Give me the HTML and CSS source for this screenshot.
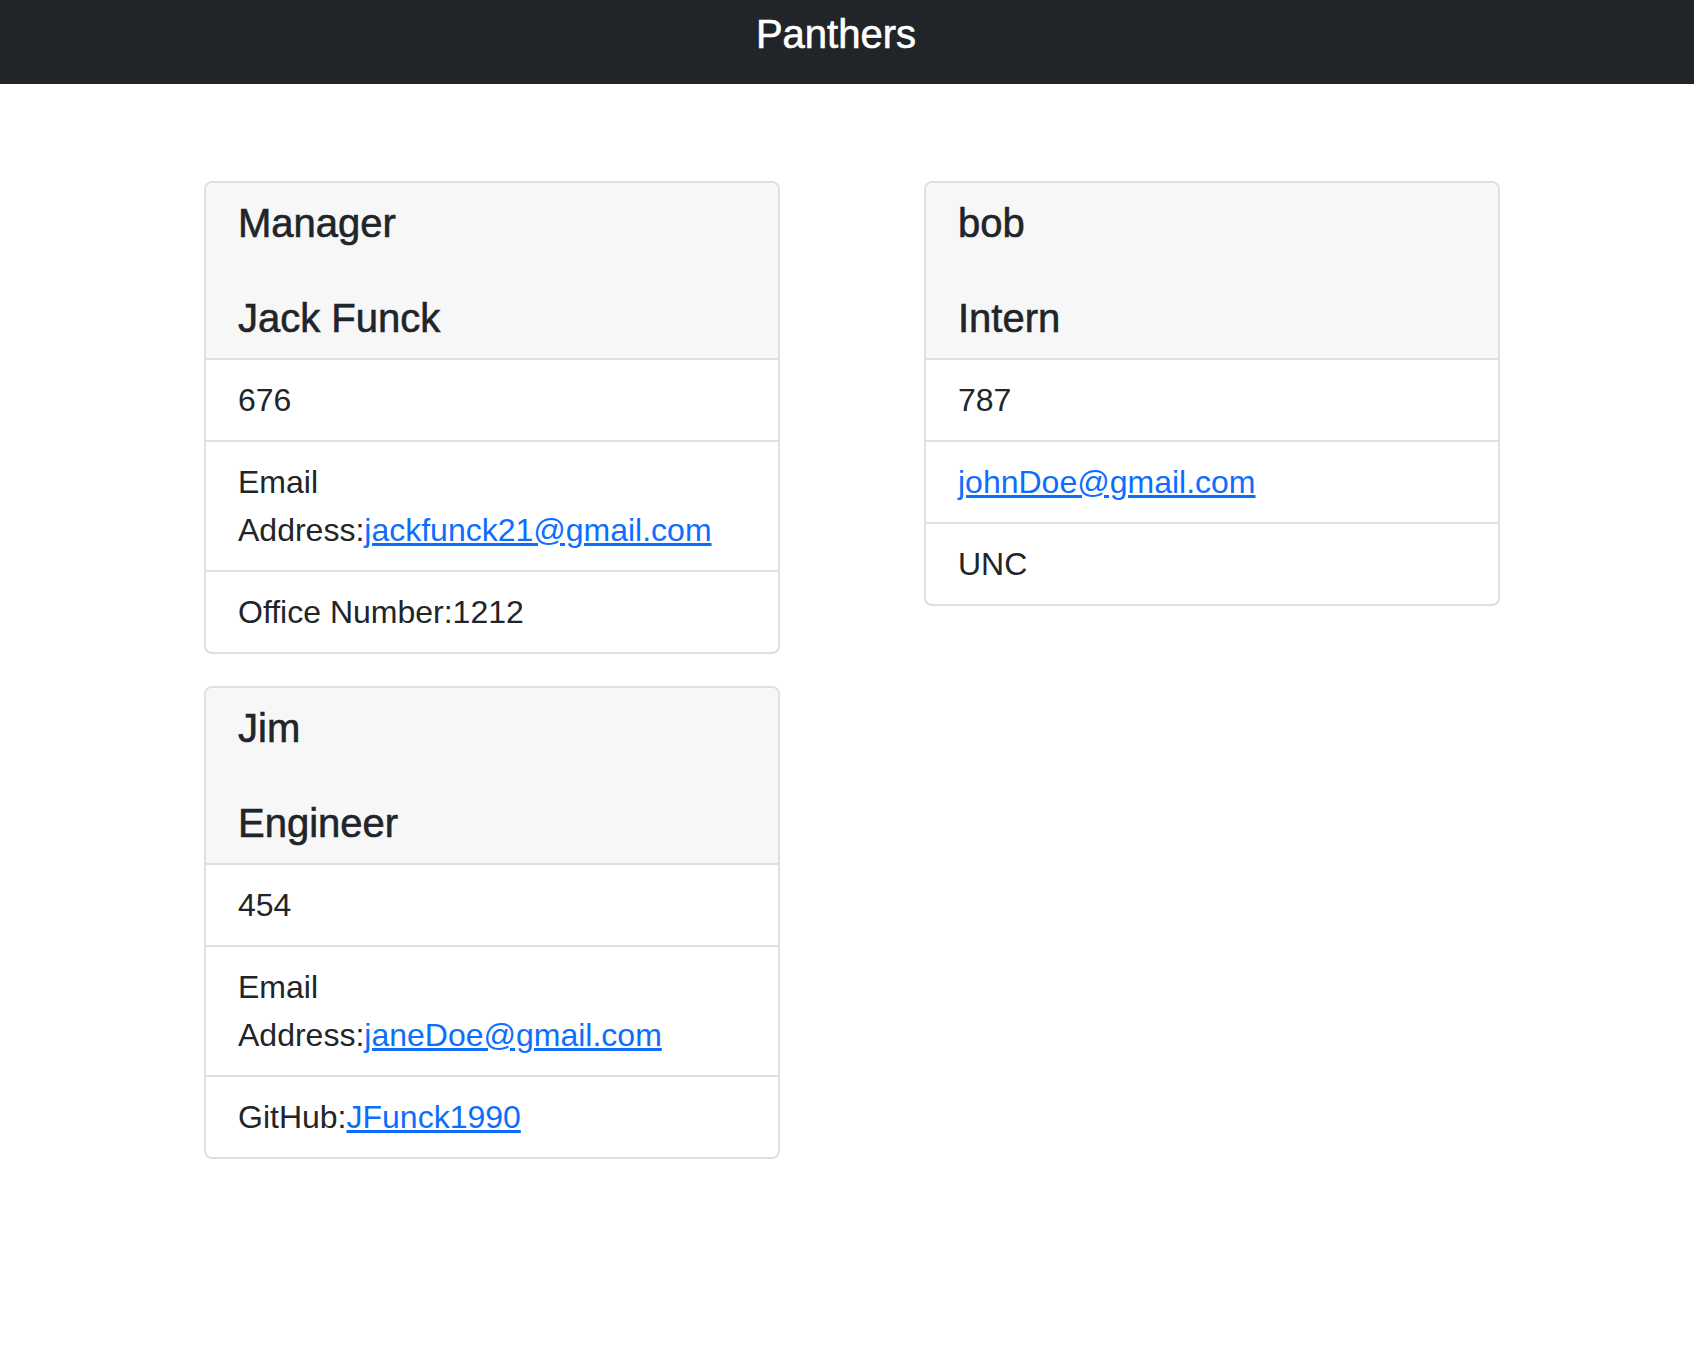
FILE: index.html
```html
<!DOCTYPE html>
<html lang="en">
<head>
<meta charset="utf-8">
<title>Team Profile</title>
<link rel="stylesheet" href="styles.css">
</head>
<body>
<header class="topbar">
  <h1 class="brand">Panthers</h1>
</header>
<main class="team">
  <section class="column">
    <div class="card">
      <div class="card-header">
        <h2 class="card-title">Manager</h2>
        <h2 class="card-title">Jack Funck</h2>
      </div>
      <ul class="list">
        <li class="item">676</li>
        <li class="item">Email Address:<a href="mailto:jackfunck21@gmail.com">jackfunck21@gmail.com</a></li>
        <li class="item">Office Number:1212</li>
      </ul>
    </div>
    <div class="card">
      <div class="card-header">
        <h2 class="card-title">Jim</h2>
        <h2 class="card-title">Engineer</h2>
      </div>
      <ul class="list">
        <li class="item">454</li>
        <li class="item">Email Address:<a href="mailto:janeDoe@gmail.com">janeDoe@gmail.com</a></li>
        <li class="item">GitHub:<a href="#">JFunck1990</a></li>
      </ul>
    </div>
  </section>
  <section class="column">
    <div class="card">
      <div class="card-header">
        <h2 class="card-title">bob</h2>
        <h2 class="card-title">Intern</h2>
      </div>
      <ul class="list">
        <li class="item">787</li>
        <li class="item"><a href="mailto:johnDoe@gmail.com">johnDoe@gmail.com</a></li>
        <li class="item">UNC</li>
      </ul>
    </div>
  </section>
</main>
</body>
</html>
```

FILE: styles.css
```css
* { box-sizing: border-box; }

html, body {
  margin: 0;
  padding: 0;
  background: #ffffff;
}

body {
  font-family: "Liberation Sans", Arial, Helvetica, sans-serif;
  font-size: 32px;
  line-height: 48px;
  color: #212529;
}

.topbar {
  background: #212529;
  height: 84px;
  padding: 10px 22px 0 0;
}

.brand {
  margin: 0;
  text-align: center;
  color: #ffffff;
  font-size: 40px;
  line-height: 48px;
  font-weight: 500;
  -webkit-text-stroke: 0.6px #ffffff;
}

.team {
  display: grid;
  grid-template-columns: 720px 720px;
  align-items: start;
  margin: 97px 0 0 132px;
}

.column {
  display: flex;
  flex-direction: column;
  align-items: center;
  gap: 32px;
}

.card {
  width: 576px;
  border: 2px solid #dfdfdf;
  border-radius: 8px;
  overflow: hidden;
  background: #ffffff;
}

.card-header {
  background: #f7f7f7;
  border-bottom: 2px solid #dfdfdf;
  padding: 16px 32px;
}

.card-title {
  margin: 0;
  font-size: 40px;
  line-height: 48px;
  font-weight: 500;
  color: #212529;
  -webkit-text-stroke: 0.6px #212529;
}

.card-title + .card-title {
  margin-top: 47px;
}

.list {
  list-style: none;
  margin: 0;
  padding: 0;
}

.item {
  padding: 16px 32px;
}

.item + .item {
  border-top: 2px solid #dfdfdf;
}

.item a {
  color: #0d6efd;
  text-decoration: underline;
}
```
